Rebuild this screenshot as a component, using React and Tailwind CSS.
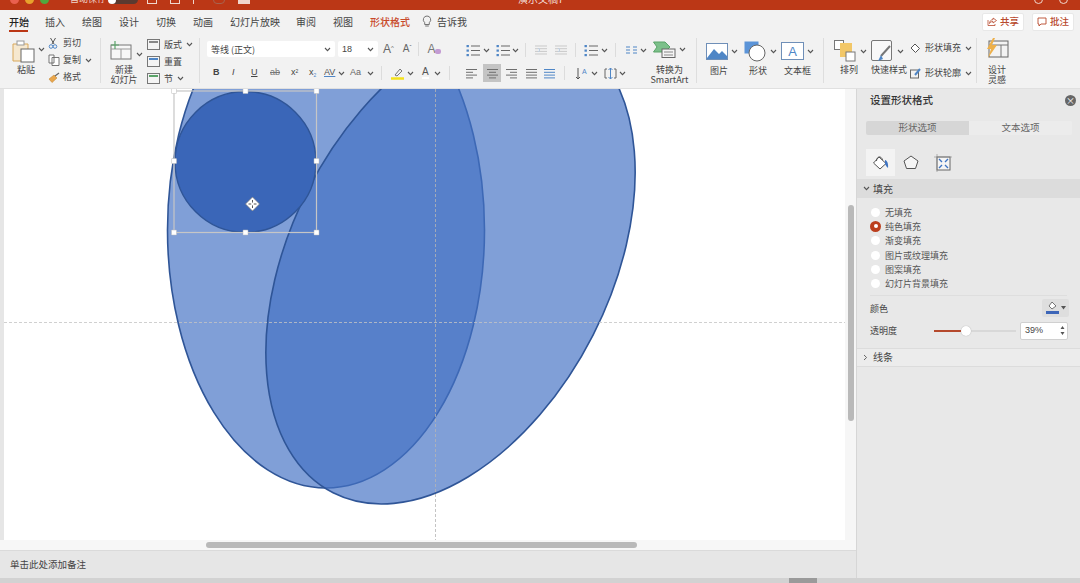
import React from "react";

const F = { fontFamily: '"Noto Sans CJK SC", "Liberation Sans", sans-serif' };

const Chev = ({ className = "" }) => (
  <svg width="7" height="5" viewBox="0 0 7 5" className={`shrink-0 ${className}`}>
    <path d="M1 1 L3.5 3.6 L6 1" fill="none" stroke="#555" strokeWidth="1.1" />
  </svg>
);
const Sep = () => <div className="w-px h-[45px] bg-[#dedede] shrink-0" />;
const VS = () => <div className="w-px h-[14px] bg-[#dcdcdc] shrink-0" />;

const Ic = ({ w, h, vb, children, className = "" }) => (
  <svg width={w} height={h} viewBox={vb || `0 0 ${w} ${h}`} className={`shrink-0 ${className}`}>{children}</svg>
);

const Lines = ({ kind, blue }) => {
  const c = "#6f6f6f";
  const rows = {
    left: [[0, 11], [0, 7], [0, 11], [0, 7]],
    center: [[1, 12], [3, 10], [1, 12], [3, 10]],
    right: [[1, 12], [5, 12], [1, 12], [5, 12]],
    just: [[1, 12], [1, 12], [1, 12], [1, 12]],
  }[kind];
  return (
    <Ic w={13} h={11}>
      {rows.map((r, i) => <path key={i} d={`M${r[0]} ${1.5 + i * 2.8} H${r[1]}`} stroke={blue || c} strokeWidth="1" />)}
    </Ic>
  );
};

const Bullet = () => (
  <Ic w={14} h={13}>
    {[2, 6.5, 11].map((y, i) => (
      <g key={i}>
        <rect x="0.5" y={y - 1} width="2.4" height="2.2" fill="#4f86c6" />
        <path d={`M5 ${y} H14`} stroke="#666" strokeWidth="1" />
      </g>
    ))}
  </Ic>
);

const Indent = () => (
  <Ic w={12} h={10}>
    {[1, 3.7, 6.4, 9].map((y) => <path key={y} d={`M0 ${y} H12`} stroke="#c9c9c9" strokeWidth="1" />)}
    <path d="M3 3 L5 5 L3 7" fill="none" stroke="#bcd0e6" />
  </Ic>
);

const L = ({ children, className = "" }) => <span className={`text-[9px] leading-[10px] text-[#444] whitespace-nowrap ${className}`}>{children}</span>;

const tabs = [
  ["开始", "w-[36px] text-[#222]"],
  ["插入", "w-[37px]"],
  ["绘图", "w-[37px]"],
  ["设计", "w-[37px]"],
  ["切换", "w-[37px]"],
  ["动画", "w-[37px]"],
  ["幻灯片放映", "w-[66px]"],
  ["审阅", "w-[37px]"],
  ["视图", "w-[37px]"],
];

function TitleBar() {
  return (
    <div className="h-[10px] bg-[#bb3716] overflow-hidden shrink-0">
      <div className="h-[4px] flex items-end">
        <div className="flex items-end gap-[6px] pl-[10px]">
          <span className="w-[9px] h-[9px] rounded-full bg-[#e9604f] shrink-0" />
          <span className="w-[9px] h-[9px] rounded-full bg-[#e8a22c] shrink-0" />
          <span className="w-[9px] h-[9px] rounded-full bg-[#4fa83f] shrink-0" />
        </div>
        <span className="text-[9px] leading-[10px] text-[#f0d6cd] ml-[21px] whitespace-nowrap">自动保存</span>
        <span className="w-[30px] h-[9px] rounded-full bg-[#5b3a30] ml-[2px] flex items-center shrink-0">
          <span className="w-[8px] h-[8px] rounded-full bg-white" />
        </span>
        <div className="w-[103px] ml-[9px] flex items-end justify-between shrink-0">
          <span className="w-[10px] h-[8px] border border-[#f0d6cd]" />
          <span className="w-[10px] h-[8px] border border-[#f0d6cd]" />
          <span className="w-[8px] h-[8px] border-l border-[#f0d6cd]" />
          <span className="w-[12px] h-[8px] border border-[#a8634f] rounded-full" />
          <span className="w-[12px] h-[6px] bg-[#f0d6cd]" />
        </div>
        <span className="text-[10px] leading-[10px] text-[#f3dcd5] ml-[268px] whitespace-nowrap">演示文稿7</span>
        <div className="ml-auto flex items-end gap-[16px] pr-[12px]">
          <span className="w-[9px] h-[9px] border border-[#f0d6cd] rounded-full" />
          <span className="w-[9px] h-[9px] border border-[#f0d6cd] rounded-full" />
        </div>
      </div>
    </div>
  );
}

function TabBar() {
  return (
    <div className="h-[23px] bg-[#f2f2f2] flex items-center pl-[9px] pr-[6px] shrink-0">
      {tabs.map(([t, c], i) => (
        <div key={t} className={`${c} h-full flex items-center shrink-0 relative`}>
          <span className={`text-[10px] leading-none ${i === 0 ? "text-[#222] font-medium" : "text-[#444]"}`}>{t}</span>
          {i === 0 && <span className="absolute left-0 top-[20px] w-[19px] h-[1.5px] bg-[#bb3716]" />}
        </div>
      ))}
      <span className="text-[10px] leading-none text-[#c8492a] font-medium w-[44px] shrink-0">形状格式</span>
      <Ic w={10} h={13} className="ml-[8px]">
        <path d="M5 1 a3.7 3.7 0 0 1 2.3 6.6 V9.5 H2.7 V7.6 A3.7 3.7 0 0 1 5 1Z M3.2 11 H6.8" fill="none" stroke="#666" strokeWidth="0.9" />
      </Ic>
      <span className="text-[10px] leading-none text-[#444] ml-[5px]">告诉我</span>
      <div className="ml-auto flex gap-[8px]">
        <div className="w-[42px] h-[18px] bg-white border border-[#e8e8e8] rounded-[2px] flex items-center justify-center gap-[3px]">
          <Ic w={10} h={9}>
            <path d="M6 1 L9.5 3.5 L6 6 V4.5 C4 4.5 3 5.5 2.5 6.5 C2.7 4 4 2.8 6 2.6Z M1 3 V8.5 H8 V7" fill="none" stroke="#b8492d" strokeWidth="0.8" />
          </Ic>
          <span className="text-[9.5px] leading-none text-[#b8492d] font-medium">共享</span>
        </div>
        <div className="w-[42px] h-[18px] bg-white border border-[#e8e8e8] rounded-[2px] flex items-center justify-center gap-[3px]">
          <Ic w={10} h={10}>
            <path d="M1 1 H9 V7 H4 L2 9 V7 H1Z" fill="none" stroke="#b8492d" strokeWidth="0.9" />
          </Ic>
          <span className="text-[9.5px] leading-none text-[#b8492d] font-medium">批注</span>
        </div>
      </div>
    </div>
  );
}

function Clipboard() {
  return (
    <div className="w-[100px] h-full flex shrink-0 pl-[12px]">
      <div className="w-[30px] flex flex-col items-start">
        <div className="flex items-center pt-[7px]">
          <Ic w={23} h={23}>
            <path d="M1 4 H16 V21 H1Z" fill="#f6e8cf" stroke="#d9a85a" />
            <rect x="5" y="1" width="7" height="4" fill="#fff" stroke="#999" />
            <rect x="9" y="9" width="13" height="13" fill="#fff" stroke="#666" />
          </Ic>
          <Chev className="ml-[3px] -mt-[4px]" />
        </div>
        <L className="mt-[2px] ml-[5px] text-[8.5px]">粘贴</L>
      </div>
      <div className="flex flex-col pt-[5px] ml-[6px] gap-[7px]">
        <div className="flex items-center h-[10px]">
          <Ic w={10} h={12}>
            <path d="M2.5 1 L6 7 M7.5 1 L4 7" stroke="#555" fill="none" />
            <circle cx="3" cy="9.5" r="1.8" fill="none" stroke="#4f86c6" />
            <circle cx="7" cy="9.5" r="1.8" fill="none" stroke="#4f86c6" />
          </Ic>
          <L className="ml-[5px] text-[8px]">剪切</L>
        </div>
        <div className="flex items-center h-[10px]">
          <Ic w={12} h={12}>
            <path d="M1 1 H6 V9 H1Z M4 3.5 H11 V11.5 H4Z" fill="#fff" stroke="#666" strokeWidth="0.9" />
          </Ic>
          <L className="ml-[3px] text-[8px]">复制</L>
          <Chev className="ml-[4px]" />
        </div>
        <div className="flex items-center h-[10px]">
          <Ic w={12} h={11}>
            <path d="M1 7 L6 3 L9 6 L4 10.5Z" fill="#e9a64c" stroke="#c88a34" strokeWidth="0.6" />
            <path d="M7 4 L11 1" stroke="#666" strokeWidth="1.2" />
          </Ic>
          <L className="ml-[3px] text-[8px]">格式</L>
        </div>
      </div>
    </div>
  );
}

function Slides() {
  return (
    <div className="w-[98px] h-full flex shrink-0 pl-[9px]">
      <div className="w-[37px] flex flex-col">
        <div className="flex items-center pt-[8px]">
          <Ic w={22} h={19}>
            <rect x="1" y="4" width="20" height="14" fill="#f7f7f7" stroke="#777" />
            <path d="M1 8 H21 M11 8 V18" stroke="#999" />
            <path d="M5 0 V8 M1 4 H9" stroke="#5aa469" strokeWidth="1.2" />
          </Ic>
          <Chev className="ml-[4px] mt-[8px]" />
        </div>
        <div className="flex flex-col items-center w-[28px] mt-[5px]">
          <L className="text-[8px]">新建</L>
          <L className="text-[8px]">幻灯片</L>
        </div>
      </div>
      <div className="flex flex-col pt-[6px] gap-[6px]">
        {[["版式", true, "#888"], ["重置", false, "#4f86c6"], ["节", true, "#5aa469"]].map(([t, ch, col]) => (
          <div key={t} className="flex items-center h-[11px]">
            <Ic w={13} h={11}>
              <rect x="0.5" y="0.5" width="12" height="10" fill="#f4f4f4" stroke="#777" />
              <rect x="2" y="2" width="9" height="2" fill={col} />
            </Ic>
            <L className="ml-[4px] text-[8px]">{t}</L>
            {ch && <Chev className="ml-[4px]" />}
          </div>
        ))}
      </div>
    </div>
  );
}

function FontGroup() {
  return (
    <div className="w-[255px] h-full shrink-0 pl-[7px] flex flex-col">
      <div className="flex items-center mt-[8px] h-[16px]">
        <div className="w-[128px] h-[16px] bg-white rounded-[2px] flex items-center justify-between px-[4px]">
          <span className="text-[9px] leading-none text-[#444]">等线 (正文)</span>
          <Chev />
        </div>
        <div className="w-[40px] h-[16px] bg-white rounded-[2px] ml-[3px] flex items-center justify-between px-[4px]">
          <span className="text-[9px] leading-none text-[#444]" style={{ fontFamily: "Liberation Sans" }}>18</span>
          <Chev />
        </div>
        <span className="text-[12px] leading-none text-[#666] ml-[5px]" style={{ fontFamily: "Liberation Sans" }}>A<sup className="text-[6px]">^</sup></span>
        <span className="text-[10px] leading-none text-[#666] ml-[9px]" style={{ fontFamily: "Liberation Sans" }}>A<sup className="text-[6px]">ˇ</sup></span>
        <div className="ml-[6px]"><VS /></div>
        <span className="text-[12px] leading-none text-[#777] ml-[9px] relative" style={{ fontFamily: "Liberation Sans" }}>A
          <span className="absolute left-[7px] top-[6px] w-[6px] h-[5px] bg-[#c39bd3] rounded-[2px]" />
        </span>
      </div>
      <div className="flex items-center mt-[8px] h-[16px] text-[#444] pl-[6px]" style={{ fontFamily: "Liberation Sans" }}>
        <span className="w-[19px] text-[9px] font-bold">B</span>
        <span className="w-[19px] text-[9px] italic">I</span>
        <span className="w-[19px] text-[9px] underline">U</span>
        <span className="w-[21px] text-[9px] line-through text-[#777]">ab</span>
        <span className="w-[18px] text-[9px]">x<sup className="text-[5px]">2</sup></span>
        <span className="w-[15px] text-[9px]">x<sub className="text-[5px] text-[#4f86c6]">2</sub></span>
        <span className="w-[14px] text-[9px] text-[#555] underline decoration-[#4f86c6]">AV</span>
        <Chev />
        <span className="w-[17px] text-[9px] text-[#666] ml-[5px]">Aa</span>
        <Chev />
        <div className="ml-[7px]"><VS /></div>
        <Ic w={13} h={13} className="ml-[9px]">
          <path d="M4 8 L9 2 L11 4 L6 9Z" fill="none" stroke="#777" />
          <path d="M0 11.5 H13" stroke="#f4e21c" strokeWidth="2.5" />
        </Ic>
        <Chev className="ml-[3px]" />
        <span className="text-[10px] leading-none ml-[8px] text-[#555] border-b-2 border-white">A</span>
        <Chev className="ml-[5px]" />
        <div className="ml-[8px]"><VS /></div>
      </div>
    </div>
  );
}

function Para() {
  return (
    <div className="w-[241px] h-full shrink-0 flex pl-[11px]">
      <div className="w-[187px] flex flex-col">
        <div className="flex items-center mt-[9px] h-[16px]">
          <Bullet /><Chev className="ml-[3px]" />
          <div className="ml-[6px]"><Bullet /></div><Chev className="ml-[2px]" />
          <div className="ml-[6px]"><VS /></div>
          <div className="ml-[9px]"><Indent /></div>
          <div className="ml-[8px]"><Indent /></div>
          <div className="ml-[8px]"><VS /></div>
          <div className="ml-[8px]"><Bullet /></div><Chev className="ml-[3px]" />
          <div className="ml-[7px]"><VS /></div>
          <Ic w={11} h={8} className="ml-[10px]">
            <path d="M0 1 H4 M0 4 H4 M0 7 H4 M7 1 H11 M7 4 H11 M7 7 H11" stroke="#4f86c6" />
          </Ic>
          <Chev className="ml-[3px]" />
        </div>
        <div className="flex items-center mt-[6px] h-[18px]">
          <Lines kind="left" />
          <div className="w-[18px] h-[18px] bg-[#c4c4c4] ml-[4px] flex items-center justify-center"><Lines kind="center" /></div>
          <div className="ml-[4px]"><Lines kind="right" /></div>
          <div className="ml-[7px]"><Lines kind="just" /></div>
          <div className="ml-[5px]"><Lines kind="just" blue="#4f86c6" /></div>
          <div className="ml-[8px]"><VS /></div>
          <Ic w={13} h={13} className="ml-[11px]">
            <path d="M2 1 V12 M0 10 L2 12 L4 10" fill="none" stroke="#555" />
            <text x="6" y="7" fontSize="7" fill="#4f86c6" fontFamily="Liberation Sans">A</text>
          </Ic>
          <Chev className="ml-[2px]" />
          <Ic w={13} h={13} className="ml-[6px]">
            <path d="M3 2 H1 V11 H3 M10 2 H12 V11 H10" fill="none" stroke="#666" />
            <path d="M6.5 1 V12 M4.5 3 L6.5 1 L8.5 3 M4.5 10 L6.5 12 L8.5 10" fill="none" stroke="#4f86c6" />
          </Ic>
          <Chev className="ml-[2px]" />
        </div>
      </div>
      <div className="w-[43px] flex flex-col items-start">
        <div className="flex items-center mt-[8px]">
          <Ic w={23} h={17}>
            <path d="M0.5 1 H12 L17 6 L12 11 H0.5 L4 6Z" fill="#7cc08a" stroke="#5aa469" />
            <rect x="9" y="8" width="13" height="8.5" fill="#f5f5f5" stroke="#666" />
            <path d="M11 11 H20 M11 14 H20" stroke="#888" />
          </Ic>
          <Chev className="ml-[3px]" />
        </div>
        <div className="flex flex-col items-center w-[33px] mt-[7px]">
          <L className="text-[8px]">转换为</L>
          <L className="text-[8px]" >SmartArt</L>
        </div>
      </div>
    </div>
  );
}

function Insert() {
  const items = [
    ["图片", <Ic w={22} h={17} key="a"><rect x="0.5" y="0.5" width="21" height="16" fill="#fff" stroke="#6f8fb8" /><path d="M1 15 L8 6 L13 11 L16 8 L21 13 V16 H1Z" fill="#4f86c6" /></Ic>],
    ["形状", <Ic w={23} h={21} key="b"><rect x="0.5" y="0.5" width="14" height="12" fill="#5b94d8" /><circle cx="13" cy="12" r="8" fill="#fff" stroke="#666" /></Ic>],
    ["文本框", <Ic w={23} h={18} key="c"><rect x="0.5" y="0.5" width="22" height="17" fill="#fff" stroke="#6f8fb8" /><text x="11.5" y="14" fontSize="13" textAnchor="middle" fill="#4f86c6" fontFamily="Liberation Sans">A</text></Ic>],
  ];
  return (
    <div className="w-[126px] h-full shrink-0 flex pl-[9px]">
      {items.map(([t, ic], i) => (
        <div key={t} className={`${i === 2 ? "w-[36px]" : i === 0 ? "w-[38px]" : "w-[37px]"} flex flex-col`}>
          <div className="flex items-center h-[22px] mt-[7px]">
            {ic}
            <Chev className="ml-[3px]" />
          </div>
          <L className={`mt-[4px] text-[8.5px] ${i === 2 ? "ml-[3px]" : i === 0 ? "ml-[4px]" : "ml-[5px]"}`}>{t}</L>
        </div>
      ))}
    </div>
  );
}

function Arrange() {
  return (
    <div className="w-[152px] h-full shrink-0 flex pl-[10px]">
      <div className="w-[37px] flex flex-col">
        <div className="flex items-center mt-[7px]">
          <Ic w={22} h={22}>
            <rect x="0.5" y="0.5" width="9" height="9" fill="#fff" stroke="#777" />
            <rect x="6" y="3" width="12" height="14" fill="#f2c768" />
            <rect x="12" y="12" width="9" height="9" fill="#fff" stroke="#777" />
          </Ic>
          <Chev className="ml-[4px]" />
        </div>
        <L className="mt-[3px] ml-[6px] text-[8.5px]">排列</L>
      </div>
      <div className="w-[39px] flex flex-col">
        <div className="flex items-center mt-[7px]">
          <Ic w={23} h={22}>
            <rect x="0.5" y="0.5" width="20" height="20" rx="1.5" fill="#f8f8f8" stroke="#777" />
            <path d="M19 6 L10 16" stroke="#777" strokeWidth="2" />
            <path d="M10 15 L7 21 L12 19Z" fill="#4f86c6" />
          </Ic>
          <Chev className="ml-[3px]" />
        </div>
        <L className="mt-[3px] text-[8px]">快速样式</L>
      </div>
      <div className="flex flex-col">
        {["形状填充", "形状轮廓"].map((t, i) => (
          <div key={t} className={`flex items-center h-[12px] ${i === 0 ? "mt-[9px]" : "mt-[13px]"}`}>
            <Ic w={11} h={11}>
              {i === 0 ? (
                <path d="M5 1 L9.5 5.5 L5.5 9.5 L1 5Z" fill="#fff" stroke="#555" />
              ) : (
                <g><rect x="0.5" y="2" width="8" height="8" fill="none" stroke="#666" /><path d="M10 1 L5 7" stroke="#4f86c6" strokeWidth="2" /></g>
              )}
            </Ic>
            <L className="ml-[4px] text-[8px]">{t}</L>
            <Chev className="ml-[4px]" />
          </div>
        ))}
      </div>
    </div>
  );
}

function Ribbon() {
  return (
    <div className="h-[56px] bg-[#f2f2f2] flex items-center shrink-0 border-b border-[#e0e0e0]">
      <Clipboard /><Sep />
      <Slides /><Sep />
      <FontGroup />
      <Para /><Sep />
      <Insert /><Sep />
      <Arrange /><Sep />
      <div className="flex flex-col items-center w-[40px] h-full pt-[5px]">
        <Ic w={23} h={21}>
          <rect x="3" y="3" width="19" height="16" fill="#f3f3f3" stroke="#666" />
          <path d="M3 7 H22 M15 7 V19" stroke="#777" />
          <path d="M7 0 L1 11 H5 L2 20 L11 7 H6 L9 0Z" fill="#edb04b" />
        </Ic>
        <L className="mt-[6px] text-[8px]">设计</L>
        <L className="text-[8px]">灵感</L>
      </div>
    </div>
  );
}

function Canvas() {
  const handles = [[174, 91], [245.5, 91], [316.5, 91], [174, 161], [316.5, 161], [174, 232.5], [245.5, 232.5], [316.5, 232.5]];
  return (
    <svg className="w-full h-full block" viewBox="4 89 841 451">
      <rect x="4" y="89" width="841" height="451" fill="#fff" />
      <ellipse cx="326" cy="230" rx="158.5" ry="258" fill="#4472c4" fillOpacity="0.68" stroke="#2f5597" strokeWidth="1.6" />
      <ellipse cx="450.5" cy="262.5" rx="160" ry="258.5" transform="rotate(27 450.5 262.5)" fill="#4472c4" fillOpacity="0.68" stroke="#2f5597" strokeWidth="1.6" />
      <circle cx="245.5" cy="162" r="70.5" fill="#3a66b8" stroke="#2f5597" strokeWidth="1.4" />
      <path d="M4 322.5 H845" stroke="#c4c4c4" strokeWidth="0.8" strokeDasharray="3 2" />
      <path d="M435.5 89 V540" stroke="#b5b5b5" strokeWidth="0.8" strokeDasharray="3 2" />
      <rect x="174" y="91" width="142.5" height="141.5" fill="none" stroke="#c6c6c6" strokeWidth="1.2" />
      {handles.map(([x, y]) => <rect key={`${x}-${y}`} x={x - 2.5} y={y - 2.5} width="5" height="5" rx="0.5" fill="#fff" stroke="#bbb" strokeWidth="0.5" />)}
      <g transform="translate(252.5 204)">
        <path d="M0 -7 L7 0 L0 7 L-7 0Z" fill="#fff" stroke="#777" strokeWidth="0.7" />
        <path d="M0 -4 V4 M-4 0 H4" stroke="#555" strokeWidth="1" />
        <circle r="1.4" fill="#fff" />
      </g>
    </svg>
  );
}

function Radio({ label, on }) {
  return (
    <div className="flex items-center h-[14.3px]">
      {on ? (
        <span className="w-[11px] h-[11px] rounded-full bg-[#bb3f1e] flex items-center justify-center ml-[-1px] mr-[-1px]"><span className="w-[4px] h-[4px] rounded-full bg-white" /></span>
      ) : (
        <span className="w-[9px] h-[9px] rounded-full bg-white" />
      )}
      <span className="text-[9px] leading-none text-[#555] ml-[5px]">{label}</span>
    </div>
  );
}

function Panel() {
  return (
    <div className="w-[224px] shrink-0 bg-[#e8e8e8] border-l border-[#d6d6d6] flex flex-col">
      <div className="flex items-center justify-between pl-[13px] pr-[4px] h-[22px]">
        <span className="text-[10.5px] leading-none font-medium text-[#333]">设置形状格式</span>
        <span className="w-[11px] h-[11px] rounded-full bg-[#666] flex items-center justify-center text-white text-[9px] leading-none">×</span>
      </div>
      <div className="mx-[9px] mt-[10px] h-[14px] flex w-[206px] text-[9.5px] text-[#666]">
        <div className="w-[103px] bg-[#d6d6d6] rounded-l-[2px] flex items-center justify-center leading-none">形状选项</div>
        <div className="w-[103px] bg-[#ececec] rounded-r-[2px] flex items-center justify-center leading-none">文本选项</div>
      </div>
      <div className="flex items-end h-[27px] mt-[14px] pl-[9px]">
        <div className="w-[29px] h-[27px] bg-[#f3f3f3] flex items-center justify-center">
          <Ic w={17} h={16}>
            <path d="M7 2 L14 8.5 L8 14 L1.5 8Z" fill="#fff" stroke="#555" />
            <path d="M4.5 6 C4.5 1 9.5 0.5 10.5 5" fill="none" stroke="#555" />
            <path d="M13 5 C15 5.5 16.5 8 16 13 C15 12 14 11 13 9Z" fill="#3f74c2" />
          </Ic>
        </div>
        <div className="w-[32px] h-[27px] flex items-center justify-center">
          <Ic w={16} h={15}>
            <path d="M8 1 L15 6 L12.5 13.5 H3.5 L1 6Z" fill="#f5f5f5" stroke="#555" />
          </Ic>
        </div>
        <div className="w-[32px] h-[27px] flex items-center justify-center">
          <Ic w={18} h={18}>
            <rect x="3" y="3" width="13" height="13" fill="#f5f5f5" stroke="#666" />
            <path d="M0 3 H18 M3 0 V18" stroke="#888" strokeWidth="0.6" />
            <path d="M5 5 L8 8 M14 5 L11 8 M5 14 L8 11 M14 14 L11 11" stroke="#3f74c2" strokeWidth="1.4" />
          </Ic>
        </div>
      </div>
      <div className="h-[19px] mt-[3px] bg-[#dcdcdc] flex items-center pl-[6px]">
        <Chev />
        <span className="text-[10px] leading-none text-[#444] ml-[3px]">填充</span>
      </div>
      <div className="flex flex-col pl-[14px] mt-[7px]">
        <Radio label="无填充" />
        <Radio label="纯色填充" on />
        <Radio label="渐变填充" />
        <Radio label="图片或纹理填充" />
        <Radio label="图案填充" />
        <Radio label="幻灯片背景填充" />
      </div>
      <div className="mx-[13px] h-px bg-[#dedede] mt-[4px]" />
      <div className="flex items-center justify-between h-[19px] mt-[3px] pl-[13px] pr-[11px]">
        <span className="text-[9px] leading-none text-[#444]">颜色</span>
        <div className="w-[27px] h-[18px] bg-[#dedede] rounded-[2px] flex items-center justify-center gap-[2px]">
          <Ic w={13} h={14}>
            <path d="M6 1 L10 5 L6 8 L3 5Z" fill="#fff" stroke="#555" strokeWidth="0.8" />
            <rect x="0" y="10" width="13" height="3" fill="#3d66b8" />
          </Ic>
          <Ic w={5} h={4}><path d="M0 0 H5 L2.5 3.5Z" fill="#555" /></Ic>
        </div>
      </div>
      <div className="flex items-center h-[18px] mt-[4px] pl-[13px] pr-[11px]">
        <span className="text-[9px] leading-none text-[#444] w-[64px]">透明度</span>
        <div className="w-[82px] h-[2px] bg-[#d8d8d8] flex items-center">
          <div className="w-[28px] h-[2px] bg-[#b5492c]" />
          <div className="w-[10px] h-[10px] rounded-full bg-white -ml-[1px] shadow-[0_0_1px_#999]" />
        </div>
        <div className="ml-[4px] w-[48px] h-[18px] bg-white border border-[#d0d0d0] rounded-[2px] flex items-center justify-between pl-[4px] pr-[2px]">
          <span className="text-[9px] leading-none font-medium text-[#444]" style={{ fontFamily: "Liberation Sans" }}>39%</span>
          <Ic w={5} h={13}><path d="M2.5 2 L4.5 5 H0.5Z M2.5 11 L4.5 8 H0.5Z" fill="#555" /></Ic>
        </div>
      </div>
      <div className="h-[19px] mt-[8px] bg-[#ececec] border-y border-[#dcdcdc] flex items-center pl-[6px]">
        <Ic w={5} h={7}><path d="M1 1 L3.6 3.5 L1 6" fill="none" stroke="#666" strokeWidth="1" /></Ic>
        <span className="text-[10px] leading-none text-[#444] ml-[5px]">线条</span>
      </div>
    </div>
  );
}

export default function App() {
  return (
    <div className="w-[1080px] h-[583px] overflow-hidden flex flex-col bg-[#e8e8e8]" style={F}>
      <TitleBar />
      <TabBar />
      <Ribbon />
      <div className="flex flex-1 min-h-0">
        <div className="w-[856px] shrink-0 flex flex-col">
          <div className="h-[451px] flex shrink-0">
            <div className="w-[4px] bg-[#e6e6e6]" />
            <div className="w-[841px]"><Canvas /></div>
            <div className="w-[11px] bg-[#f6f6f6] flex pt-[116px] pl-[3px]">
              <div className="w-[6px] h-[216px] rounded-full bg-[#b9b9b9]" />
            </div>
          </div>
          <div className="h-[10px] bg-[#f7f7f7] flex items-center pl-[206px] shrink-0">
            <div className="w-[431px] h-[6px] rounded-full bg-[#b9b9b9]" />
          </div>
          <div className="flex-1 bg-[#e6e6e6] border-t border-[#dadada] flex items-center pl-[10px]">
            <span className="text-[9.5px] leading-none text-[#444]">单击此处添加备注</span>
          </div>
        </div>
        <Panel />
      </div>
      <div className="h-[5px] bg-[#d2d2d2] shrink-0 flex pl-[789px]">
        <div className="w-[28px] h-full bg-[#9a9a9a]" />
      </div>
    </div>
  );
}
